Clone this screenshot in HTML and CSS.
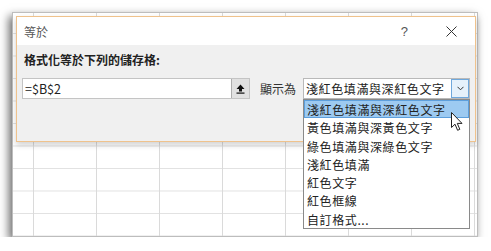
FILE: index.html
```html
<!DOCTYPE html>
<html lang="zh-Hant">
  <head>
    <meta charset="UTF-8" />
    <title>等於</title>
    <link rel="stylesheet" href="styles.css">
  </head>
  <body>
    <div class="sheet">
      <div class="dialog">
        <div class="title-bar">
          <span class="title">等於</span>
          <span class="help">?</span>
          <svg class="close" width="11" height="11" viewBox="0 0 11 11">
            <path d="M0.5 0.5 L10.5 10.5 M10.5 0.5 L0.5 10.5" stroke="#333" stroke-width="1" fill="none" />
          </svg>
        </div>
        <div class="dialog-body">
          <div class="prompt">格式化等於下列的儲存格:</div>
          <div class="row">
            <div class="ref-input">
              <span class="ref-text">=$B$2</span>
              <button class="collapse-btn">
                <svg width="9" height="10" viewBox="0 0 9 10">
                  <path d="M4.5 0.5 L8.5 5 L6 5 L6 7.5 L3 7.5 L3 5 L0.5 5 Z" fill="#111" />
                  <rect x="0.5" y="8.5" width="8" height="1.2" fill="#111" />
                </svg>
              </button>
            </div>
            <span class="show-as">顯示為</span>
            <div class="combo">
              <span class="combo-text">淺紅色填滿與深紅色文字</span>
              <span class="combo-btn">
                <svg width="7" height="5" viewBox="0 0 7 5">
                  <path d="M0.5 0.8 L3.5 3.8 L6.5 0.8" stroke="#333" stroke-width="1" fill="none" />
                </svg>
              </span>
              <ul class="combo-list">
                <li class="selected">淺紅色填滿與深紅色文字</li>
                <li>黃色填滿與深黃色文字</li>
                <li>綠色填滿與深綠色文字</li>
                <li>淺紅色填滿</li>
                <li>紅色文字</li>
                <li>紅色框線</li>
                <li>自訂格式...</li>
              </ul>
              <svg class="cursor" width="13" height="20" viewBox="0 0 13 20">
                <path d="M0.5 0.5 L0.5 15.5 L4 12.2 L6.6 18.3 L8.8 17.3 L6.3 11.4 L11 11.4 Z" fill="#fff" stroke="#222" stroke-width="1" stroke-linejoin="round" />
              </svg>
            </div>
          </div>
        </div>
      </div>
    </div>
  </body>
</html>
```

FILE: styles.css
```css
* {
  margin: 0;
  padding: 0;
  box-sizing: border-box;
}

body {
  background: #fff;
  font-family: "Noto Sans CJK TC", "Noto Sans", sans-serif;
  font-size: 12px;
  color: #222;
}

/* Worksheet behind the dialog */
.sheet {
  margin: 12px 0 0 12px;
  width: 466px;
  height: 225px;
  padding: 3px;
  border: 1px solid #bdbdbd;
  background-color: #fff;
  background-image:
    linear-gradient(to right, #dadada 1px, transparent 1px),
    linear-gradient(to bottom, #e2e2e2 1px, transparent 1px);
  background-size: 63px 100%, 100% 22.5px;
  background-position: 20px 0, 0 20px;
  box-shadow: -3px 4px 9px rgba(0, 0, 0, 0.6);
}

.dialog {
  width: 460px;
  height: 126px;
  border: 1px solid #efc28c;
  background: #f0f0f0;
  box-shadow: 0 3px 6px rgba(0, 0, 0, 0.18);
}

.title-bar {
  height: 28px;
  background: #fff;
  display: flex;
  align-items: center;
  padding: 0 0 0 7px;
}

.title {
  flex: 1;
  color: #555;
  font-size: 12px;
}

.help {
  color: #555;
  font-size: 13px;
  margin-right: 38px;
  font-family: "Liberation Sans", sans-serif;
}

.close {
  margin-right: 18px;
}

.dialog-body {
  padding: 7px 5px 0 5px;
}

.prompt {
  padding-left: 2px;
  font-weight: bold;
  line-height: 16px;
  color: #222;
}

.row {
  display: flex;
  align-items: center;
  margin-top: 10px;
}

.ref-input {
  display: flex;
  width: 228px;
  height: 21px;
  border: 1px solid #c4c4c4;
  background: #fff;
}

.ref-text {
  flex: 1;
  padding-left: 2px;
  line-height: 19px;
  font-size: 12.5px;
}

.collapse-btn {
  width: 18px;
  height: 19px;
  border: none;
  border-left: 1px solid #adadad;
  background: #e1e1e1;
  display: flex;
  align-items: center;
  justify-content: center;
}

.show-as {
  margin-left: 10px;
  width: 43px;
  color: #333;
}

.combo {
  position: relative;
  display: flex;
  width: 167px;
  height: 21px;
  border: 1px solid #b9b9b9;
  background: #fff;
}

.combo-text {
  flex: 1;
  padding-left: 2px;
  line-height: 19px;
  letter-spacing: 0.6px;
}

.combo-btn {
  width: 18px;
  height: 19px;
  border: 1px solid #6fa8dc;
  background: #e5f1fb;
  display: flex;
  align-items: center;
  justify-content: center;
}

/* Open drop-down list */
.combo-list {
  position: absolute;
  top: 20px;
  left: -1px;
  width: 167px;
  list-style: none;
  background: #fff;
  border: 1px solid #8a8a8a;
}

.combo-list li {
  height: 18.3px;
  line-height: 18px;
  padding-left: 2px;
  letter-spacing: 0.6px;
  border: 1px solid transparent;
}

.combo-list li.selected {
  background: #9dcaf1;
  border-color: #5d9fdc;
}

.cursor {
  position: absolute;
  top: 33px;
  left: 147px;
}
```
